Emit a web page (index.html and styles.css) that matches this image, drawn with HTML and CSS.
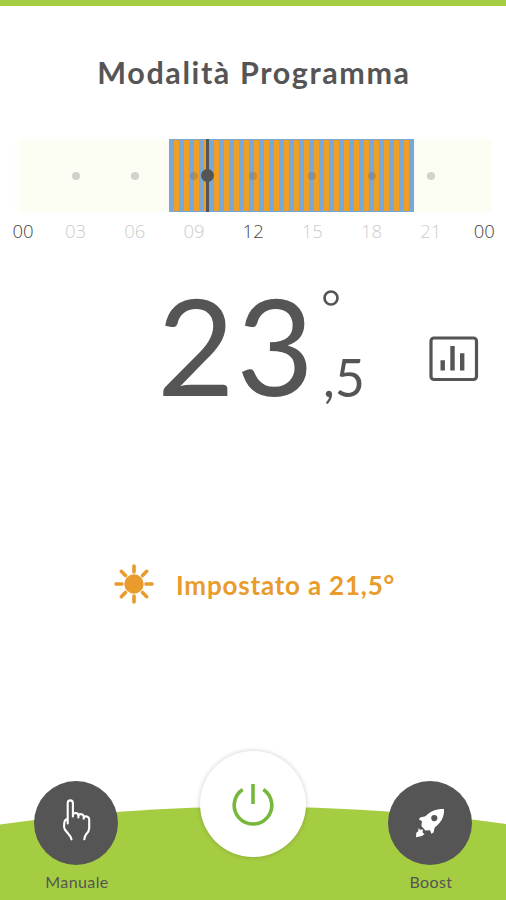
FILE: index.html
```
<!DOCTYPE html>
<html lang="it">
<head>
  <meta charset="UTF-8">
  <meta name="viewport" content="width=device-width, initial-scale=1">
  <title>Modalità Programma</title>
  <link rel="stylesheet" href="styles.css">
</head>
<body>
  <h1>Modalità Programma</h1>

  <div class="timeline">
    <div class="active"></div>
    <div class="grid dots">
      <i></i><i></i><i></i><i></i><i></i><i></i><i></i>
    </div>
    <div class="now"></div>
  </div>
  <div class="grid hours">
    <span class="dark">00</span>
    <span>03</span>
    <span>06</span>
    <span>09</span>
    <span class="dark">12</span>
    <span>15</span>
    <span>18</span>
    <span>21</span>
    <span class="dark">00</span>
  </div>

  <div class="temp">
    <span class="big">23</span>
    <div class="side">
      <svg class="degree" width="16" height="16" viewBox="0 0 16 16"><circle cx="8" cy="8" r="6.5"/></svg>
      <span class="decimal">,5</span>
    </div>
    <svg class="chart" width="50" height="46" viewBox="0 0 50 46">
      <rect x="2" y="2" width="45.500" height="41.500" rx="3"/>
      <path d="M13.700 34.500V24.300M23.500 34.500V10M33.200 34.500V17.300"/>
    </svg>
  </div>

  <div class="setpoint">
    <svg width="42" height="42" viewBox="0 0 42 42">
      <circle cx="21" cy="21" r="9.700"/>
      <path d="M21 3v6M21 33v6M3 21h6M33 21h6M8.300 8.300l4.200 4.200M29.500 29.500l4.200 4.200M33.700 8.300l-4.200 4.200M12.500 29.500l-4.200 4.200"/>
    </svg>
    <span>Impostato a 21,5°</span>
  </div>

  <div class="footer">
    <svg class="hill" width="506" height="94" viewBox="0 0 506 94"><path d="M0 18.500Q253-16.500 506 18V94H0z"/></svg>
    <div class="item">
      <button class="round">
        <svg width="84" height="84" viewBox="0 0 84 84">
          <path class="hand" d="M37.500 58.300l-1-2.600-5.700-7.200c-1.500-2-.6-5-.4-7.200.1-1.800 1.200-2.900 3.300-3.400M33.700 42.500V22.300c0-3.900 5.200-3.900 5.200 0V35.500M38.900 34.500c0-3.300 5.500-3.300 5.500.3v1.700M44.400 35c.5-2.700 5.300-2.400 5.300.8v1.900M49.700 36.600c1.300-2.200 5.500-1.200 5.500 2.200v8.500c0 2-1.400 4.300-3 6-1.300 1.500-1.700 3-1.900 5"/>
        </svg>
      </button>
      <span>Manuale</span>
    </div>
    <button class="power">
      <svg width="44" height="44" viewBox="0 0 44 44">
        <path d="M11.700 7.500A18.800 18.800 0 1 0 32.300 7.500M22 2v20"/>
      </svg>
    </button>
    <div class="item">
      <button class="round">
        <svg width="84" height="84" viewBox="0 0 84 84">
          <path class="rocket" fill-rule="evenodd" d="M56 28c-8-.2-13.500 2-18.500 7.300l-5.500 1.200-1 2 3 1.700-.6 4.800 4 4.500 4.700-.3 1.200 3.600 2.200-1.200 1.200-5c6-5 9.800-10 9.300-18.600zM46.300 34a3.100 3.100 0 1 1 0 6.200 3.100 3.100 0 0 1 0-6.200z"/>
          <path class="rocket" d="M30.500 47l1.500 1.800 3-.3-.5 3 2 1.500-2.500 2-6 1.200.3-4.500 2-1.500z"/>
        </svg>
      </button>
      <span>Boost</span>
    </div>
  </div>
</body>
</html>
```

FILE: styles.css
```
* {
  box-sizing: border-box;
}
body {
  display: flex;
  flex-direction: column;
  width: 506px;
  height: 900px;
  margin: 0;
  border-top: 6px solid #a5cd42;
  background: #fff;
  color: #555;
  font-family: Lato, "Open Sans", sans-serif;
  overflow: hidden;
}
h1 {
  margin: 48px 0 0;
  padding-left: 2px;
  height: 36px;
  line-height: 36px;
  font-size: 30.5px;
  font-weight: 700;
  letter-spacing: 1.6px;
  text-align: center;
  white-space: nowrap;
}

/* 24h bar */
.timeline {
  position: relative;
  height: 73px;
  margin-top: 49px;
  background: linear-gradient(to right, #fff 13px, #fefffa 14px, #fefffa 19px, #fcfdf3 20px, #fcfdf3 491px, #fff 492px);
}
.active {
  position: absolute;
  left: 169px;
  top: 0;
  width: 245px;
  height: 73px;
  background: repeating-linear-gradient(to right, #7aa8d6 0, #7aa8d6 5px, #f09f26 5px, #f09f26 10px);
  border: solid #7aa8d6;
  border-width: 1px 0;
}
.grid {
  display: grid;
  grid-template-columns: 46px repeat(7, 59.2px) 48px;
}
.dots {
  position: relative;
  height: 73px;
  align-items: center;
}
.dots i {
  width: 8px;
  height: 8px;
  border-radius: 50%;
  background: rgba(85, 85, 85, .25);
  justify-self: center;
}
.dots i:first-child {
  grid-column: 2;
}
.now {
  position: absolute;
  left: 206px;
  top: 0;
  width: 3px;
  height: 73px;
  background: #555;
}
.now:after {
  content: "";
  position: absolute;
  left: -5px;
  top: 30px;
  width: 13px;
  height: 13px;
  border-radius: 50%;
  background: #555;
}
.hours {
  margin-top: 7px;
  line-height: 24px;
  font-family: "Open Sans", sans-serif;
  font-size: 18.5px;
  font-weight: 300;
  text-align: center;
  color: #ccc;
}
.hours .dark {
  color: #444;
}

/* current temperature */
.temp {
  display: flex;
  height: 130px;
  margin-top: 39px;
  padding-left: 157px;
}
.big {
  width: 160px;
  line-height: 125px;
  font-size: 134px;
  letter-spacing: 1.5px;
}
.side {
  width: 112px;
  padding: 8px 0 0 6px;
}
.degree {
  display: block;
  fill: none;
  stroke: #555;
  stroke-width: 2.7;
}
.decimal {
  display: block;
  margin-top: 36px;
  line-height: 70px;
  font-size: 52px;
}
.chart {
  margin-top: 54px;
  fill: none;
  stroke: #555;
  stroke-width: 3.2;
}
.chart path {
  stroke-width: 4.4;
}

.setpoint {
  display: flex;
  align-items: center;
  gap: 21px;
  height: 42px;
  margin-top: 151px;
  padding-left: 113px;
  color: #e99b2b;
  font-size: 26px;
  font-weight: 700;
  letter-spacing: .8px;
  white-space: nowrap;
}
.setpoint span {
  padding-top: 2px;
}
.setpoint svg {
  fill: #e99b2b;
  stroke: #e99b2b;
  stroke-width: 3.6;
  stroke-linecap: round;
}
.setpoint circle {
  stroke: none;
}

/* bottom buttons */
.footer {
  position: relative;
  display: flex;
  justify-content: space-between;
  height: 150px;
  margin-top: auto;
  padding: 0 33px;
}
.hill {
  position: absolute;
  left: 0;
  bottom: 0;
  fill: #a5cd42;
}
.item {
  position: relative;
  display: flex;
  flex-direction: column;
  align-items: center;
  width: 86px;
  padding-top: 31px;
  font-size: 16px;
  line-height: 20px;
  letter-spacing: .4px;
}
.item span {
  margin-top: 7px;
  padding-left: 2px;
}
button {
  border: 0;
  padding: 0;
  border-radius: 50%;
}
.round {
  width: 84px;
  height: 84px;
  background: #555;
}
.round svg {
  display: block;
}
.hand {
  fill: none;
  stroke: #fff;
  stroke-width: 2.1;
  stroke-linecap: round;
  stroke-linejoin: round;
}
.rocket {
  fill: #fff;
}
.power {
  position: relative;
  display: flex;
  align-items: center;
  justify-content: center;
  width: 106px;
  height: 106px;
  margin-top: 1px;
  background: #fff;
  box-shadow: 0 0 5px rgba(0, 0, 0, .2);
}
.power svg {
  fill: none;
  stroke: #77b83c;
  stroke-width: 3.6;
}
```
